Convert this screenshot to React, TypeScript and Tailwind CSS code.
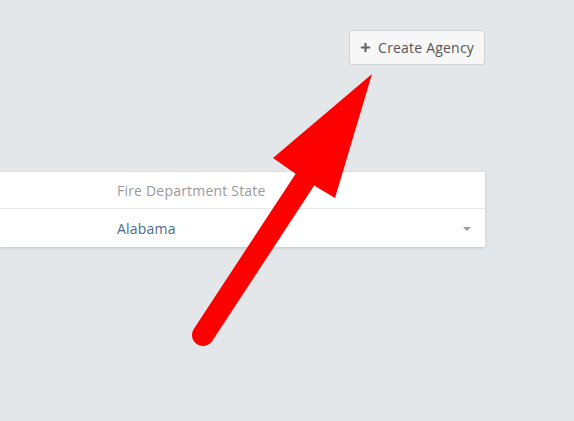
import { Plus } from "lucide-react";

export default function App() {
  return (
    <main className="relative h-[421px] w-[574px] overflow-hidden bg-[#e4e7ea] font-['Open_Sans',sans-serif]">
      {/* Toolbar */}
      <div className="flex justify-end pr-[89px] pt-[30px]">
        <button className="flex h-[35px] items-center gap-[6px] rounded-[3px] border border-[#cfd2d5] bg-[#f7f7f7] pl-[9px] pr-[10px] text-[14px] tracking-[0.2px] text-[#555]">
          <Plus className="h-[13px] w-[13px] text-[#666]" strokeWidth={4} />
          Create Agency
        </button>
      </div>

      {/* Table */}
      <div className="mt-[107px] w-[485px] bg-white shadow-[0_1px_3px_rgba(0,0,0,0.15)]">
        <div className="flex h-[37px] items-center border-b border-[#e8e8e8] pl-[117px] pt-[1px] text-[14px] tracking-[0.2px] text-[#9a9a9a]">
          Fire Department State
        </div>
        <div className="flex h-[38px] items-center justify-between pl-[117px] pr-[14px] pt-[1px] text-[14px] tracking-[0.2px] text-[#4b6b8c]">
          <span>Alabama</span>
          <span className="h-0 w-0 border-x-[4px] border-t-[4px] border-x-transparent border-t-[#999]" />
        </div>
      </div>

      {/* Annotation arrow */}
      <svg className="absolute left-0 top-0" width="574" height="421" viewBox="0 0 574 421">
        <line x1="203" y1="335" x2="306" y2="178" stroke="#ff0000" strokeWidth="22" strokeLinecap="round" />
        <polygon points="372,74 335,198 315,186 293,172 273,158" fill="#ff0000" />
      </svg>
    </main>
  );
}
